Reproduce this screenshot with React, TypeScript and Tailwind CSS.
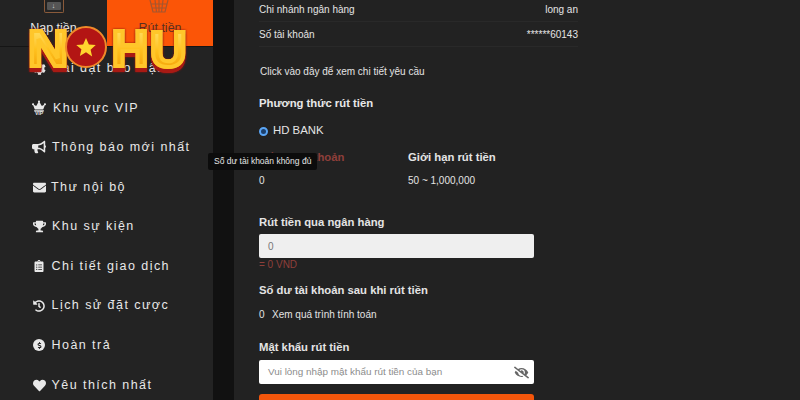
import React from "react";
import { FaBullhorn, FaEnvelope, FaTrophy, FaClipboardList, FaHistory, FaHeart, FaCrown, FaDollarSign, FaCog, FaEyeSlash } from "react-icons/fa";

const menu: { icon: React.ReactNode; label: string; gap: string }[] = [
  { icon: <FaCog size={13} />, label: "Cài đặt bảo mật", gap: "ml-[6px]" },
  {
    icon: (
      <span className="flex flex-col items-center">
        <FaCrown size={14} />
        <span className="mt-[-2px] text-[5px] font-bold leading-[5px]">VIP</span>
      </span>
    ),
    label: "Khu vực VIP",
    gap: "ml-[7px]",
  },
  { icon: <FaBullhorn size={14} />, label: "Thông báo mới nhất", gap: "ml-[6px]" },
  { icon: <FaEnvelope size={13} />, label: "Thư nội bộ", gap: "ml-[5px]" },
  { icon: <FaTrophy size={13} />, label: "Khu sự kiện", gap: "ml-[6px]" },
  { icon: <FaClipboardList size={12} />, label: "Chi tiết giao dịch", gap: "ml-[5.5px]" },
  { icon: <FaHistory size={12} />, label: "Lịch sử đặt cược", gap: "ml-[5.5px]" },
  {
    icon: (
      <span className="flex h-3 w-3 items-center justify-center rounded-full bg-[#e8e8e8] text-[#232323]">
        <FaDollarSign size={7} />
      </span>
    ),
    label: "Hoàn trả",
    gap: "ml-[5.5px]",
  },
  { icon: <FaHeart size={13} />, label: "Yêu thích nhất", gap: "ml-[5.5px]" },
];

function Logo() {
  const letter =
    "bg-gradient-to-b from-[#ffe66b] via-[#ffc21e] to-[#f09a00] bg-clip-text text-transparent [-webkit-text-stroke:4px_#ffc62a] px-[2px] [filter:drop-shadow(0_4px_0_#a81a14)_drop-shadow(0_0_1px_#8a1410)]";
  return (
    <div className="absolute left-[26px] top-[24px] z-20 flex h-[46px] items-center font-['Liberation_Sans',sans-serif] text-[50px] font-bold leading-none">
      <span className={`${letter} mt-[4px] origin-left scale-x-[1.1]`}>N</span>
      <span className="z-10 ml-[-1px] flex h-[42px] w-[42px] shrink-0 items-center justify-center rounded-full border-[2px] border-[#f08a2a] bg-[#b31514]">
        <svg width="24" height="23" viewBox="0 0 24 24" aria-hidden="true">
          <path d="M12 2l3 6.8 7.2.7-5.4 4.8 1.6 7.1L12 17l-6.4 3.9 1.6-7.1L1.8 9.5 9 8.8z" fill="#ffd52e" />
        </svg>
      </span>
      <span className={`${letter} ml-[3px] mt-[4px]`}>H</span>
      <span className={`${letter} ml-[-2px] mt-[6px]`}>U</span>
    </div>
  );
}

function Sidebar() {
  return (
    <aside className="flex w-[213px] shrink-0 flex-col bg-[#232323]">
      <div className="flex h-[47px] shrink-0 border-b border-[#151515]">
        <div className="flex w-[107px] flex-col items-center">
          <div className="flex h-[13px] w-[20px] items-center justify-center rounded-b-[2px] border border-t-0 border-[#8a5a3a]">
            <div className="mb-[1px] flex h-[8px] w-[14px] items-center justify-center rounded-[1px] bg-[#555] text-[7px] leading-none text-[#ddd]">↓</div>
          </div>
          <span className="mt-[8px] text-[12.5px] leading-[15px] text-[#e6e6e6]">Nạp tiền</span>
        </div>
        <div className="flex flex-1 flex-col items-center bg-[#fb5507]">
          <svg width="20" height="13" viewBox="0 0 20 13" fill="none" stroke="#a5562f" strokeWidth="1.2" className="mr-[2px]" aria-hidden="true">
            <path d="M1 0l3 12h12l3-12M6 0l1.5 12M14 0l-1.5 12M10 0v12M2.5 4h15M3.5 8h13" />
          </svg>
          <span className="mt-[8px] text-[12.5px] leading-[15px] text-[#5b3020]">Rút tiền</span>
        </div>
      </div>
      <nav className="flex flex-col pl-[32px] pt-[1.5px]">
        {menu.map((m) => (
          <div key={m.label} className="flex h-[39.6px] shrink-0 items-center text-[#e8e8e8]">
            <span className="flex w-[14px] justify-center">{m.icon}</span>
            <span className={`${m.gap} whitespace-nowrap text-[12.5px] tracking-[1.45px]`}>{m.label}</span>
          </div>
        ))}
      </nav>
    </aside>
  );
}

function Main() {
  return (
    <main className="flex-1 bg-[#222222] pl-[25px] text-[#e4e4e4]">
      <div className="w-[319px] text-[10px]">
        <div className="flex h-[22px] items-center justify-between border-b border-[#292929] pb-[3px] pt-[1px]">
          <span>Chi nhánh ngân hàng</span>
          <span>long an</span>
        </div>
        <div className="flex h-[25px] items-center justify-between border-b border-[#292929]">
          <span>Số tài khoản</span>
          <span>******60143</span>
        </div>
      </div>
      <p className="ml-[1px] mt-[17px] text-[10px] leading-[16px]">Click vào đây để xem chi tiết yêu cầu</p>
      <h3 className="mt-[14px] text-[11.3px] font-bold leading-[18px] text-[#e8e8e8]">Phương thức rút tiền</h3>
      <div className="mt-[10px] flex h-[18px] items-center text-[11.4px]">
        <span className="h-[9px] w-[9px] rounded-full border-[2px] border-[#5aa5f5] bg-[#1c3f6b]" />
        <span className="ml-[5px]">HD BANK</span>
      </div>
      <div className="mt-[8px] flex">
        <div className="w-[149px]">
          <div className="text-[11.3px] font-bold leading-[18px] text-[#8e3f3a]">Số dư tài khoản</div>
          <div className="mt-[7px] text-[10px] leading-[16px]">0</div>
        </div>
        <div>
          <div className="text-[11.3px] font-bold leading-[18px]">Giới hạn rút tiền</div>
          <div className="mt-[7px] text-[10px] leading-[16px]">50 ~ 1,000,000</div>
        </div>
      </div>
      <h3 className="mt-[24px] text-[11.3px] font-bold leading-[18px]">Rút tiền qua ngân hàng</h3>
      <div className="mt-[3px] flex h-[24px] w-[275px] items-center rounded-[2px] bg-[#efefef] pl-[9px] text-[10px] text-[#777]">0</div>
      <div className="text-[10px] leading-[13px] text-[#8e3f3a]">= 0 VND</div>
      <h3 className="mt-[10px] text-[11.3px] font-bold leading-[18px]">Số dư tài khoản sau khi rút tiền</h3>
      <div className="mt-[8px] flex text-[10px] leading-[16px]">
        <span className="w-[13px]">0</span>
        <span>Xem quá trình tính toán</span>
      </div>
      <h3 className="mt-[15px] text-[11.3px] font-bold leading-[18px]">Mật khẩu rút tiền</h3>
      <div className="mt-[4px] flex h-[24px] w-[275px] items-center justify-between rounded-[2px] bg-white pl-[9px] pr-[5px] text-[9.9px] text-[#8c8c8c]">
        <span>Vui lòng nhập mật khẩu rút tiền của bạn</span>
        <FaEyeSlash size={15} className="text-[#666]" />
      </div>
      <div className="mt-[10px] h-[20px] w-[275px] rounded-[3px] bg-[#f4560b]" />
    </main>
  );
}

export default function App() {
  return (
    <div className="relative flex h-[400px] w-[800px] overflow-hidden bg-[#222222] font-['Liberation_Sans',Arial,sans-serif]">
      <Sidebar />
      <div className="w-[21px] shrink-0 bg-[#111111]" />
      <Main />
      <Logo />
      <div className="absolute left-[208px] top-[153px] z-10 flex h-[17px] items-center whitespace-nowrap rounded-[2px] bg-[#0c0c0c] px-[6px] text-[8.5px] text-[#e6e6e6]">
        Số dư tài khoản không đủ
      </div>
    </div>
  );
}
